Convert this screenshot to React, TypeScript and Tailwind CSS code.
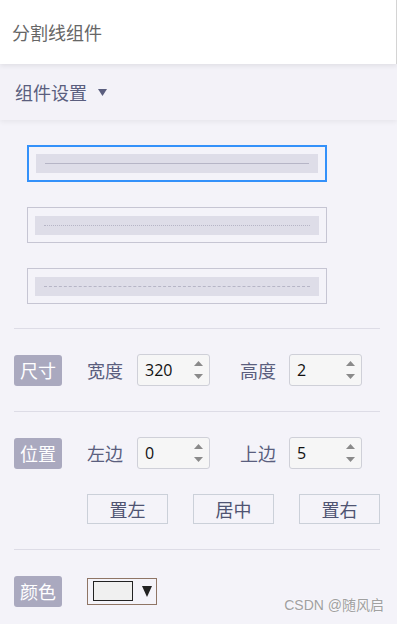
import React from "react";

const font = { fontFamily: '"Microsoft YaHei", "Noto Sans CJK SC", "Noto Sans", sans-serif' };

const Badge = ({ text }: { text: string }) => (
  <div className="w-[48px] h-[31px] bg-[#aaa9bf] rounded-[3px] text-white text-[18px] flex items-center justify-center shrink-0">
    {text}
  </div>
);

const NumInput = ({ value }: { value: string }) => (
  <div className="w-[73px] h-[32px] border border-[#cfd0d8] rounded-[3px] bg-[#f6f6f6] flex items-center justify-between pl-[7px] pr-[6px] shrink-0">
    <span className="text-[16px] text-[#111]" style={{ fontFamily: '"Open Sans", "Noto Sans", sans-serif' }}>{value}</span>
    <div className="flex flex-col gap-[8px]">
      <svg width="9" height="5" viewBox="0 0 9 5"><path d="M4.5 0 L9 5 L0 5 Z" fill="#8a8a8a" /></svg>
      <svg width="9" height="5" viewBox="0 0 9 5"><path d="M0 0 L9 0 L4.5 5 Z" fill="#8a8a8a" /></svg>
    </div>
  </div>
);

const LineBox = ({ active, kind }: { active?: boolean; kind: "solid" | "dotted" | "dashed" }) => (
  <div
    className={
      active
        ? "w-[300px] h-[37px] border-2 border-[#3491fa] flex items-center px-[7px]"
        : "w-[300px] h-[36px] border border-[#c6c5d3] flex items-center px-[7px]"
    }
  >
    <div className="w-full h-[19px] bg-[#dedde8] flex items-center px-[9px]">
      {kind === "solid" && <div className="w-full border-t border-[#b6b5c6]" />}
      {kind === "dotted" && <div className="w-full border-t border-dotted border-[#b6b5c6]" />}
      {kind === "dashed" && <div className="w-full border-t border-dashed border-[#b6b5c6]" />}
    </div>
  </div>
);

const Btn = ({ text }: { text: string }) => (
  <div className="w-[81px] h-[30px] border border-[#cbd0d9] flex items-center justify-center text-[18px] text-[#4f5472]">
    {text}
  </div>
);

export default function App() {
  return (
    <div className="w-[397px] h-[624px] bg-[#f4f3f9] overflow-hidden relative" style={font}>
      <div className="relative z-20 h-[64px] bg-white flex items-center px-[12px] border-r border-[#d4d4d4] shadow-[0_2px_5px_rgba(0,0,0,0.08)]">
        <span className="text-[18px] text-[#666]">分割线组件</span>
      </div>
      <div className="relative z-10 h-[56px] bg-[#f3f2f8] flex items-center px-[15px] shadow-[0_2px_5px_rgba(0,0,0,0.06)]">
        <span className="text-[18px] text-[#5a5e7e]">组件设置</span>
        <svg className="ml-[11px]" width="9" height="7" viewBox="0 0 9 7"><path d="M0 0 L9 0 L4.5 7 Z" fill="#5a5e7e" /></svg>
      </div>

      <div className="pl-[14px] pr-[17px]">
        <div className="flex flex-col gap-[25px] pl-[13px] pt-[25px]">
          <LineBox active kind="solid" />
          <LineBox kind="dotted" />
          <LineBox kind="dashed" />
        </div>

        <div className="mt-[24px] border-t border-[#dddce6]" />

        <div className="my-[25px] flex items-center h-[32px] text-[18px] text-[#5a5e7e]">
          <Badge text="尺寸" />
          <span className="ml-[25px] w-[36px]">宽度</span>
          <div className="ml-[14px]"><NumInput value="320" /></div>
          <span className="ml-[30px] w-[36px]">高度</span>
          <div className="ml-[13px]"><NumInput value="2" /></div>
        </div>

        <div className="border-t border-[#dddce6]" />

        <div className="mt-[25px] flex items-center h-[32px] text-[18px] text-[#5a5e7e]">
          <Badge text="位置" />
          <span className="ml-[25px] w-[36px]">左边</span>
          <div className="ml-[14px]"><NumInput value="0" /></div>
          <span className="ml-[30px] w-[36px]">上边</span>
          <div className="ml-[13px]"><NumInput value="5" /></div>
        </div>

        <div className="mt-[25px] ml-[73px] flex gap-[25px]">
          <Btn text="置左" />
          <Btn text="居中" />
          <Btn text="置右" />
        </div>

        <div className="mt-[25px] border-t border-[#dddce6]" />

        <div className="mt-[25px] flex items-center h-[32px]">
          <Badge text="颜色" />
          <div className="ml-[25px] w-[70px] h-[27px] border border-[#8f7565] bg-[#f4f3f9] flex items-center pl-[5px]">
            <div className="w-[40px] h-[20px] border border-[#222] bg-[#f0f0f0]" />
            <svg className="ml-[9px]" width="10" height="11" viewBox="0 0 10 11"><path d="M0 0 L10 0 L5 11 Z" fill="#222" /></svg>
          </div>
        </div>
      </div>

      <div
        className="absolute right-[13px] bottom-[8px] text-[14px] text-[#a0a0a0] [text-shadow:0_0_2px_#fff]"
        style={{ fontFamily: '"Liberation Sans", "Noto Sans CJK SC", sans-serif' }}
      >
        CSDN @随风启
      </div>
    </div>
  );
}
